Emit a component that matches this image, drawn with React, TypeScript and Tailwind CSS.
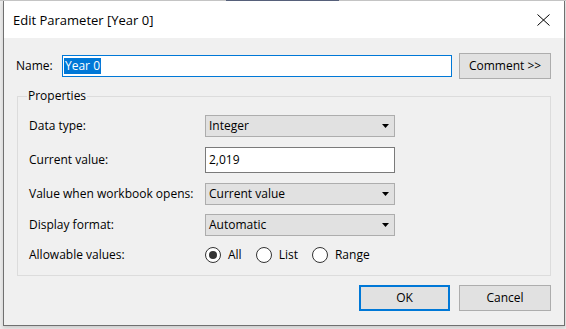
import React from 'react';

const FONT = "font-['Segoe_UI','Open_Sans',sans-serif]";

function SelectBox({ value }: { value: string }) {
	return (
		<div className="flex h-[22px] w-[190px] items-center justify-between border border-[#adadad] bg-[#e1e1e1] pl-[3px] pr-[5px]">
			<span>{value}</span>
			<svg width="7" height="4" viewBox="0 0 7 4">
				<path d="M0 0H7L3.5 4Z" fill="#000" />
			</svg>
		</div>
	);
}

function Radio({ label, checked }: { label: string; checked?: boolean }) {
	return (
		<div className="flex items-center gap-[7px]">
			<span className="flex h-[16px] w-[16px] items-center justify-center rounded-full border border-[#333] bg-white">
				{checked && <span className="h-[8px] w-[8px] rounded-full bg-[#333]" />}
			</span>
			<span>{label}</span>
		</div>
	);
}

function Row({ label, mt, children }: { label: string; mt: string; children: React.ReactNode }) {
	return (
		<div className={`flex items-center ${mt}`}>
			<div className="w-[187px] pl-[11px]">{label}</div>
			{children}
		</div>
	);
}

export default function App() {
	return (
		<div className={`h-[329px] w-[566px] overflow-hidden bg-[#ececec] text-[12px] leading-[16px] text-black ${FONT}`}>
			<div className="flex h-px">
				<div className="w-[226px] bg-[#c4c4c4]" />
				<div className="w-[113px] bg-[#56607a]" />
				<div className="flex-1 bg-[#c4c4c4]" />
			</div>
			<div className="ml-[3px] flex h-[325px] w-[562px] flex-col border-x border-b border-[#707070] bg-[#f0f0f0] shadow-[0_2px_4px_rgba(0,0,0,0.15)]">
				<div className="flex h-[37px] shrink-0 items-center justify-between bg-white pl-[9px] pr-[14px]">
					<span className="pt-px text-[13px] leading-[20px]">Edit Parameter [Year 0]</span>
					<svg width="13" height="12" viewBox="0 0 13 12">
						<path d="M0.5 0.5L12.5 11.5M12.5 0.5L0.5 11.5" stroke="#000" strokeWidth="1" />
					</svg>
				</div>

				<div className="mt-[15px] flex h-[26px] items-center pl-[12px]">
					<span className="w-[46px]">Name:</span>
					<div className="flex h-[22px] w-[390px] items-center border border-[#0078d7] bg-white pl-[1px]">
						<span className="bg-[#0078d7] px-px text-white">Year 0</span>
					</div>
					<button
						type="button"
						className="ml-[7px] h-[26px] w-[92px] border border-[#adadad] bg-[#e1e1e1]"
					>
						Comment &gt;&gt;
					</button>
				</div>

				<div className="mx-[13px] mt-[17px] flex h-[180px] flex-col border border-[#dcdcdc]">
					<div className="-mt-[9px] ml-[9px] self-start bg-[#f0f0f0] px-px">Properties</div>
					<Row label="Data type:" mt="mt-[11px]">
						<SelectBox value="Integer" />
					</Row>
					<Row label="Current value:" mt="mt-[10px]">
						<div className="flex h-[26px] w-[190px] items-center border border-[#7a7a7a] bg-white pl-[3px]">
							2,019
						</div>
					</Row>
					<Row label="Value when workbook opens:" mt="mt-[10px]">
						<SelectBox value="Current value" />
					</Row>
					<Row label="Display format:" mt="mt-[9px]">
						<SelectBox value="Automatic" />
					</Row>
					<Row label="Allowable values:" mt="mt-[11px]">
						<div className="flex items-center gap-[14px]">
							<Radio label="All" checked />
							<Radio label="List" />
							<Radio label="Range" />
						</div>
					</Row>
				</div>

				<div className="mt-[9px] flex justify-end gap-[9px] pr-[13px]">
					<button type="button" className="h-[26px] w-[91px] border-2 border-[#0078d7] bg-[#e1e1e1]">
						OK
					</button>
					<button type="button" className="h-[26px] w-[92px] border border-[#adadad] bg-[#e1e1e1]">
						Cancel
					</button>
				</div>
			</div>
		</div>
	);
}
